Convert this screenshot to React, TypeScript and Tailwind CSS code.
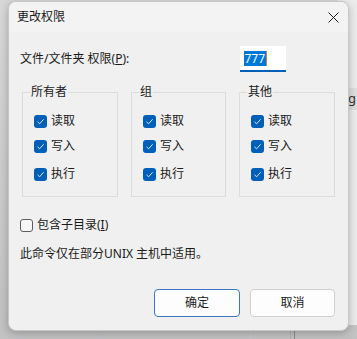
import React from 'react';

const font = { fontFamily: '"Noto Sans", "Noto Sans CJK SC", sans-serif' };

const Check = ({ checked, label }: { checked: boolean; label: React.ReactNode }) => {
  return (
    <div className="flex flex-row items-center h-[16px]">
      {checked ? (
        <div className="w-[13px] h-[13px] rounded-[3px] bg-[#005fb8] flex items-center justify-center">
          <svg width="9" height="9" viewBox="0 0 9 9">
            <path d="M1.5 4.8 L3.6 6.8 L7.6 2.3" fill="none" stroke="#dbe8f5" strokeWidth="1" />
          </svg>
        </div>
      ) : (
        <div className="w-[13px] h-[13px] rounded-[3px] border border-[#5d5d5d] bg-[#f7f7f7]" />
      )}
      <span className="ml-[4px] text-[12px] text-[#1a1a1a] leading-[16px]">{label}</span>
    </div>
  );
};

const Group = ({ title, w }: { title: string; w: string }) => {
  return (
    <fieldset className={`${w} border border-[#dcdcdc] pb-[14px]`}>
      <legend className="ml-[7px] px-[1px] text-[12px] leading-[16px] text-[#1a1a1a]">{title}</legend>
      <div className="flex flex-col pt-[13px] pl-[11px]">
        <Check checked label="读取" />
        <div className="h-[9px]" />
        <Check checked label="写入" />
        <div className="h-[12px]" />
        <Check checked label="执行" />
      </div>
    </fieldset>
  );
};

export default function App() {
  return (
    <div className="relative w-[357px] h-[339px] overflow-hidden bg-gradient-to-b from-[#d8d8d8] to-[#c2c2c2]" style={font}>
      {/* stuff behind the dialog */}
      <div className="absolute right-0 top-0 w-[20px] h-[325px] bg-[#ececec]" />
      <div className="absolute right-0 top-[88px] w-[20px] h-[22px] bg-[#dedede] flex items-center justify-end text-[13px] text-[#333] pr-[1px]">ng</div>
      <div className="absolute left-[20px] top-[326px] w-[1px] h-[13px] bg-[#b8c4d4]" />
      <div className="absolute left-[100px] top-[326px] w-[1px] h-[13px] bg-[#b8c4d4]" />
      <div className="absolute left-[250px] top-[326px] w-[1px] h-[13px] bg-[#c0c8d4]" />
      <div className="absolute left-[290px] top-[326px] w-[1px] h-[13px] bg-[#b0b0b0]" />
      <div className="absolute left-[294px] top-[326px] w-[1px] h-[13px] bg-[#8a8a8a]" />

      <div className="relative ml-[8px] mt-[1px] w-[341px] h-[330px] rounded-[8px] bg-[#f0f0f0] border border-[#c8c8c8] shadow-[0_2px_8px_rgba(0,0,0,0.25)] overflow-hidden flex flex-col">
        <div className="h-[30px] bg-[#f3f3f3] flex flex-row items-center justify-between pl-[8px] pr-[9px]">
          <span className="text-[12px] text-[#1a1a1a] leading-[16px]">更改权限</span>
          <svg width="11" height="11" viewBox="0 0 11 11">
            <path d="M0.5 0.5 L10.5 10.5 M10.5 0.5 L0.5 10.5" stroke="#1a1a1a" strokeWidth="1" />
          </svg>
        </div>

        <div className="flex flex-col pl-[11px]">
          <div className="flex flex-row items-center mt-[14px] h-[26px]">
            <span className="w-[220px] text-[12px] text-[#1a1a1a] leading-[16px]">
              文件/文件夹 权限(<span className="underline">P</span>):
            </span>
            <div className="w-[46px] h-[26px] bg-white border-b-2 border-[#005fb8] flex items-center pl-[4px]">
              <span className="bg-[#0078d7] text-white text-[12px] leading-[15px] px-[0.5px]">777</span>
              <span className="w-[1px] h-[15px] bg-[#e08020]" />
            </div>
          </div>

          <div className="flex flex-row mt-[12px] ml-[2px] gap-[13px]">
            <Group title="所有者" w="w-[96px]" />
            <Group title="组" w="w-[95px]" />
            <Group title="其他" w="w-[96px]" />
          </div>

          <div className="mt-[20px]">
            <Check checked={false} label={<>包含子目录(<span className="underline">I</span>)</>} />
          </div>

          <div className="mt-[13px] text-[12px] leading-[16px] text-[#1a1a1a]">此命令仅在部分UNIX 主机中适用。</div>

          <div className="flex flex-row justify-end gap-[10px] mt-[27px] pr-[13px]">
            <button className="w-[86px] h-[28px] rounded-[4px] bg-[#fdfdfd] border border-[#3a78c2] text-[12px] text-[#1a1a1a]">确定</button>
            <button className="w-[85px] h-[28px] rounded-[4px] bg-[#fdfdfd] border border-[#d0d0d0] text-[12px] text-[#1a1a1a]">取消</button>
          </div>
        </div>
      </div>
    </div>
  );
}
